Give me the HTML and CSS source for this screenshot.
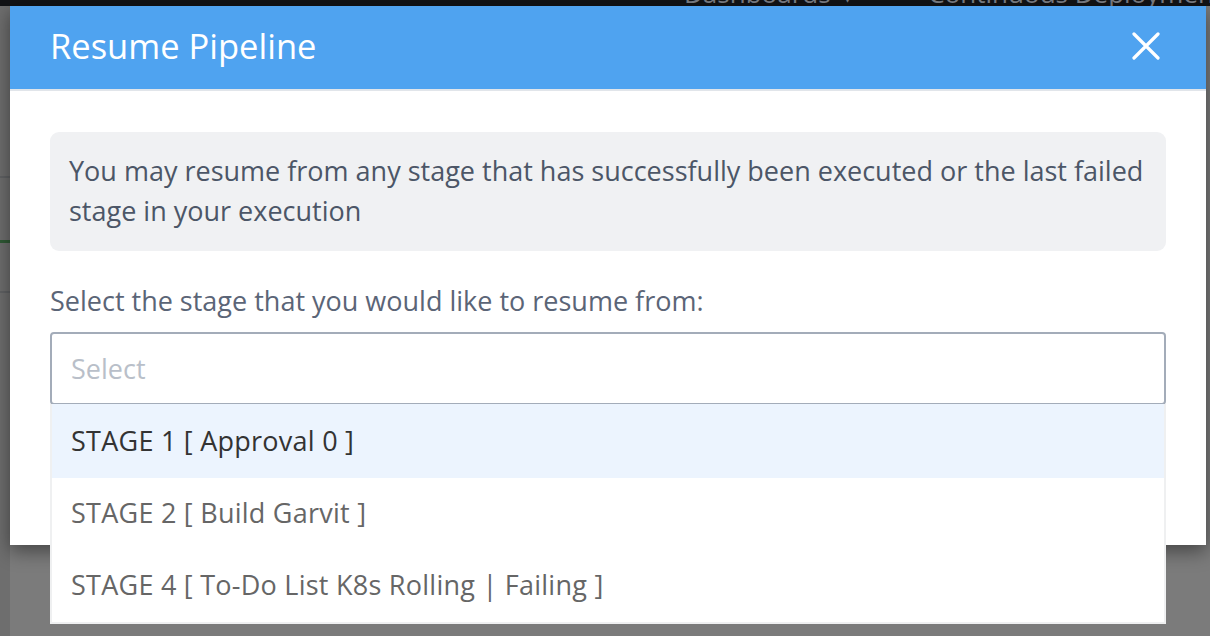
FILE: index.html
```html
<!DOCTYPE html>
<html>
<head>
<meta charset="utf-8">
<link rel="stylesheet" href="styles.css">
</head>
<body>
<div class="topbar">
  <div class="topnav">
    <span class="nav-item nav-dash">Dashboards <span class="caret">▾</span></span>
    <span class="nav-item">Continuous Deployment</span>
  </div>
</div>
<div class="stage">
  <div class="side">
    <div class="side-line l1"></div>
    <div class="side-line green"></div>
    <div class="side-line l2"></div>
  </div>
  <div class="modal">
    <div class="modal-header">
      <h1 class="modal-title">Resume Pipeline</h1>
      <button class="close-btn" aria-label="Close">
        <svg width="28" height="28" viewBox="0 0 28 28"><path d="M2 2 L26 26 M26 2 L2 26" stroke="#fff" stroke-width="3.2" stroke-linecap="round" fill="none"/></svg>
      </button>
    </div>
    <div class="modal-body">
      <div class="info">You may resume from any stage that has successfully been executed or the last failed stage in your execution</div>
      <div class="label">Select the stage that you would like to resume from:</div>
      <div class="select-wrap">
        <div class="select">Select</div>
        <ul class="menu">
          <li class="opt active">STAGE 1 [ Approval 0 ]</li>
          <li class="opt">STAGE 2 [ Build Garvit ]</li>
          <li class="opt">STAGE 4 [ To-Do List K8s Rolling | Failing ]</li>
        </ul>
      </div>
    </div>
  </div>
</div>
</body>
</html>
```
FILE: styles.css
```css
* { box-sizing: border-box; }
html, body { margin: 0; padding: 0; }
body {
  width: 1210px;
  height: 636px;
  overflow: hidden;
  background: #7b7b7b;
  font-family: "Open Sans", Lato, sans-serif;
}
.topbar {
  height: 6px;
  background: #121316;
  overflow: hidden;
}
.topnav {
  display: flex;
  margin-top: -22px;
  padding-left: 684px;
  gap: 76px;
  font-size: 26px;
  line-height: 30px;
  color: #7c7f86;
  white-space: nowrap;
}
.caret { font-size: 18px; margin-left: 6px; }
.stage {
  display: flex;
  height: 630px;
}
.side {
  width: 10px;
  background: #6e6e6e;
  display: flex;
  flex-direction: column;
  padding-top: 170px;
}
.side-line { height: 2px; background: #606264; }
.side-line.green { margin-top: 62px; height: 3px; background: #2f5a35; }
.side-line.l2 { margin-top: 48px; }
.modal {
  width: 1196px;
  height: 539px;
  background: #fff;
  box-shadow: 0 6px 18px rgba(0,0,0,0.45);
  display: flex;
  flex-direction: column;
}
.modal-header {
  height: 85px;
  background: #4fa3f0;
  border-bottom: 2px solid #e1e5ea;
  display: flex;
  align-items: center;
  justify-content: space-between;
  padding: 0 46px 4px 40px;
}
.modal-title {
  margin: 0;
  font-weight: 400;
  font-size: 34.5px;
  color: #fff;
}
.close-btn {
  border: 0;
  background: none;
  padding: 0;
  width: 28px;
  height: 28px;
  display: flex;
}
.modal-body {
  padding: 41px 40px 0 40px;
  display: flex;
  flex-direction: column;
}
.info {
  background: #f0f1f3;
  border-radius: 9px;
  padding: 19px 19px 20px 19px;
  font-size: 27px;
  line-height: 40px;
  color: #4c5667;
}
.label {
  margin-top: 32px;
  font-size: 27px;
  line-height: 36px;
  color: #5b6577;
}
.select-wrap {
  position: relative;
  margin-top: 13px;
}
.select {
  height: 73px;
  border: 2px solid #a3acb9;
  border-radius: 4px;
  padding: 0 19px;
  display: flex;
  align-items: center;
  font-size: 27px;
  color: #b9bfc9;
}
.menu {
  position: absolute;
  top: 72px;
  left: 0;
  right: 0;
  margin: 0;
  padding: 0;
  list-style: none;
  background: #fff;
  border: 2px solid #eff0f1;
  border-top: 0;
}
.opt {
  height: 72px;
  display: flex;
  align-items: center;
  padding: 0 19px 4px 19px;
  font-size: 27px;
  letter-spacing: 0.25px;
  color: #666;
}
.opt.active {
  background: #ecf4fe;
  color: #333;
  height: 74px;
  padding-bottom: 2px;
}
```
